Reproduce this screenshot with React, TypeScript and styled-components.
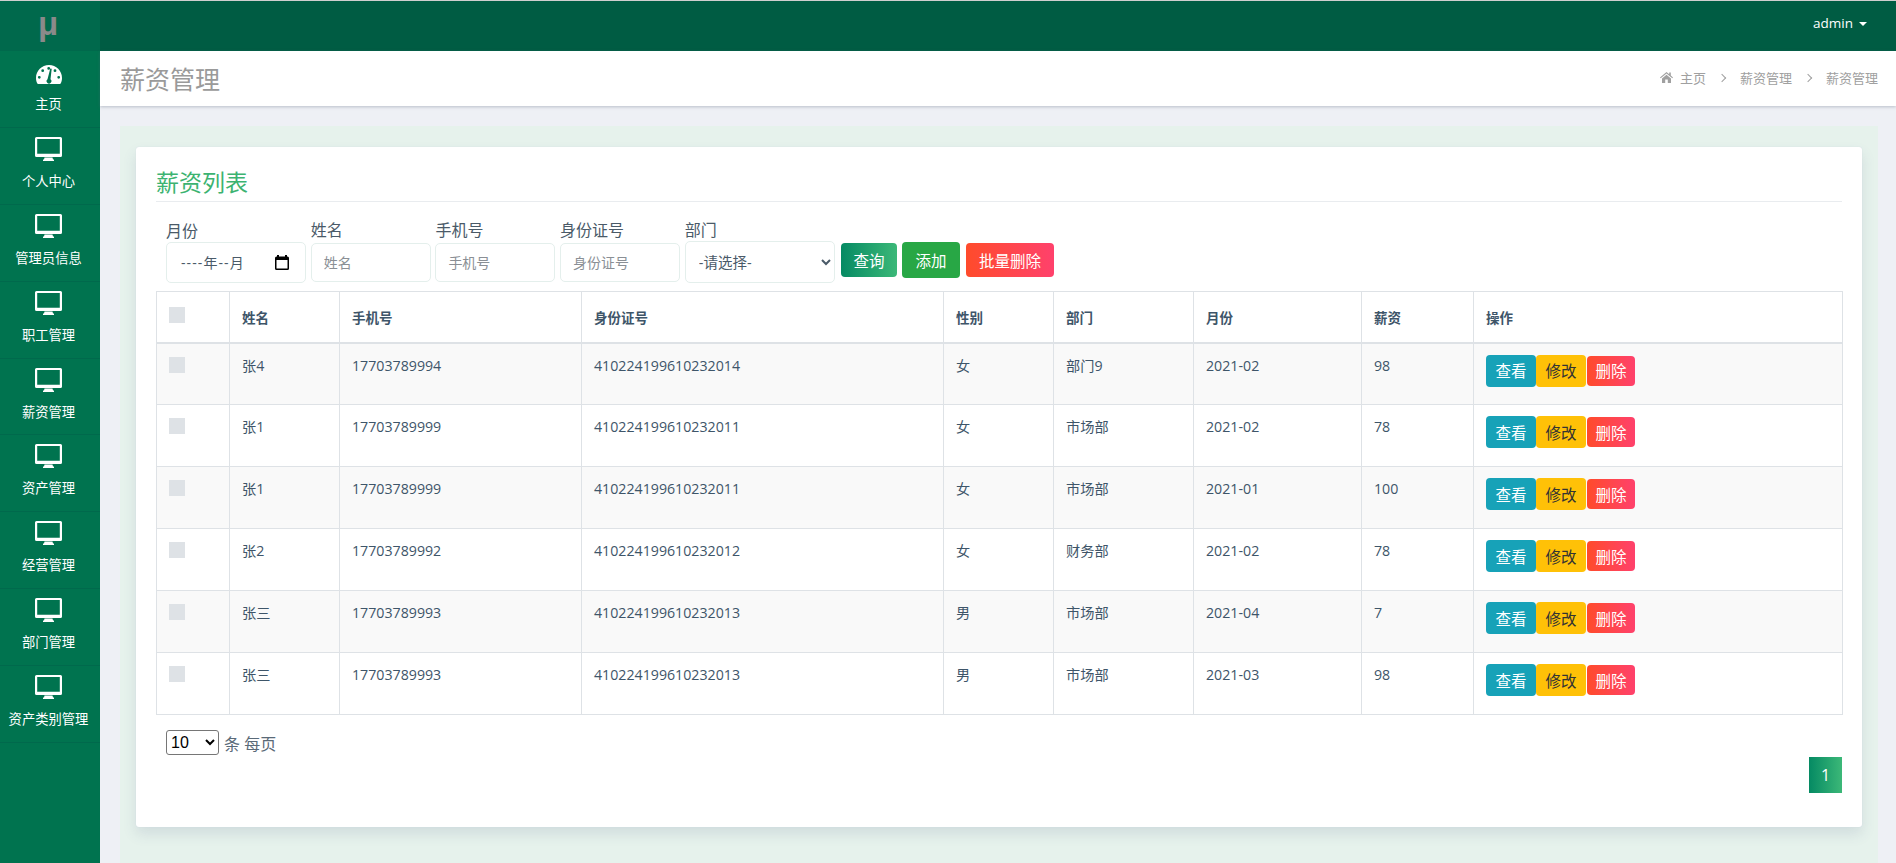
import React from 'react';
import styled, { createGlobalStyle } from 'styled-components';

const cjk = '"Open Sans", "Noto Sans CJK SC", sans-serif';

const menus = ['主页', '个人中心', '管理员信息', '职工管理', '薪资管理', '资产管理', '经营管理', '部门管理', '资产类别管理'];

const rows = [
  { name: '张4', phone: '17703789994', id: '410224199610232014', sex: '女', dept: '部门9', month: '2021-02', pay: '98' },
  { name: '张1', phone: '17703789999', id: '410224199610232011', sex: '女', dept: '市场部', month: '2021-02', pay: '78' },
  { name: '张1', phone: '17703789999', id: '410224199610232011', sex: '女', dept: '市场部', month: '2021-01', pay: '100' },
  { name: '张2', phone: '17703789992', id: '410224199610232012', sex: '女', dept: '财务部', month: '2021-02', pay: '78' },
  { name: '张三', phone: '17703789993', id: '410224199610232013', sex: '男', dept: '市场部', month: '2021-04', pay: '7' },
  { name: '张三', phone: '17703789993', id: '410224199610232013', sex: '男', dept: '市场部', month: '2021-03', pay: '98' },
];

const GlobalStyle = createGlobalStyle`
  html, body {
    margin: 0;
    padding: 0;
    height: 100%;
    overflow: hidden;
  }
  body {
    font-family: ${cjk};
    font-size: 14px;
    color: #3e5569;
    background: #eef0f5;
  }
  * {
    box-sizing: border-box;
  }
`;

const Page = styled.div`
  display: flex;
  flex-direction: column;
  height: 863px;
  border-top: 1px solid #cfcfcf;
`;

const TopBar = styled.header`
  display: flex;
  flex: none;
  height: 50px;
  background: #005c43;
`;

const LogoCell = styled.div`
  width: 100px;
  background: #00694c;
  color: #8a8a8a;
  font: bold 33px/45px "Liberation Sans", sans-serif;
  text-align: center;
  padding-right: 4px;
`;

const UserMenu = styled.div`
  margin-left: auto;
  padding: 14px 29px 0 0;
  color: #fff;
  font-size: 13.5px;
  line-height: 17px;
  display: flex;
  align-items: flex-start;
`;

const Caret = styled.span`
  margin: 7px 0 0 6px;
  border-top: 4px solid #fff;
  border-left: 4px solid transparent;
  border-right: 4px solid transparent;
`;

const Body = styled.div`
  display: flex;
  flex: 1;
  min-height: 0;
`;

const Sidebar = styled.nav`
  width: 100px;
  flex: none;
  background: #00734f;
`;

const MenuItem = styled.a`
  display: flex;
  flex-direction: column;
  align-items: center;
  height: 76.9px;
  padding: 9px 3px 0 0;
  border-bottom: 1px solid #00694c;
  color: #fff;
  font-size: 13.3px;
  line-height: 18px;
  white-space: nowrap;
`;

const IconSlot = styled.span`
  display: flex;
  align-items: flex-end;
  height: 24px;
  margin-bottom: 11px;
`;

const Main = styled.main`
  flex: 1;
  min-width: 0;
  display: flex;
  flex-direction: column;
`;

const TitleBar = styled.div`
  display: flex;
  flex: none;
  align-items: center;
  justify-content: space-between;
  height: 55px;
  padding: 0 18px 2px 20px;
  background: #fff;
  box-shadow: 0 1px 3px rgba(90, 100, 120, 0.35);
`;

const PageTitle = styled.h1`
  margin: 0;
  font-size: 25px;
  font-weight: 400;
  color: #9a9a9a;
`;

const Crumbs = styled.div`
  display: flex;
  align-items: center;
  font-size: 13px;
  color: #a0a0a0;
  svg {
    margin-right: 7px;
  }
`;

const CrumbSep = styled.span`
  width: 6px;
  height: 6px;
  margin: 0 15px 0 13px;
  border-top: 1px solid #a0a0a0;
  border-right: 1px solid #a0a0a0;
  transform: rotate(45deg);
`;

const Content = styled.div`
  flex: 1;
  min-height: 0;
  margin: 20px 18px 0 20px;
  padding: 21px 16px 0;
  background: #e6f2ec;
`;

const Card = styled.section`
  height: 680px;
  padding: 20px 20px 0;
  background: #fff;
  border-radius: 3px;
  box-shadow: 0 0 1px #c9d3de, 0 7px 14px rgba(60, 80, 120, 0.13);
`;

const CardTitle = styled.h2`
  margin: 0;
  height: 35px;
  font-size: 23px;
  line-height: 30px;
  font-weight: 400;
  color: #3cb371;
  border-bottom: 1px solid #e9ecef;
`;

const FilterRow = styled.div`
  display: flex;
  align-items: flex-end;
  height: 89px;
  padding: 0 0 8px 10px;
`;

const Field = styled.label`
  display: flex;
  flex-direction: column;
  margin-right: 4.7px;
  font-size: 16px;
  line-height: 20px;
  color: #4a5a68;
`;

const Input = styled.input`
  width: 120px;
  height: 39px;
  margin-top: 3px;
  margin-bottom: 1px;
  padding: 0 12px;
  background: #fff;
  border: 1px solid #e4efec;
  border-radius: 5px;
  color: #5a6a78;
  font-family: ${cjk};
  font-size: 14px;
  outline: none;
  &::placeholder {
    color: #8a8f95;
  }
`;

const DateBox = styled.div`
  display: flex;
  align-items: center;
  justify-content: space-between;
  width: 140px;
  height: 41px;
  margin-top: 1px;
  padding: 0 16px 0 14px;
  background: #fff;
  border: 1px solid #e4efec;
  border-radius: 5px;
  color: #4a5a68;
  font-size: 14px;
`;

const DateText = styled.span`
  letter-spacing: 1.1px;
`;

const Select = styled.select`
  width: 150px;
  height: 42px;
  margin-top: 1px;
  padding: 0 9px;
  background: #fff;
  border: 1px solid #e4efec;
  border-radius: 5px;
  color: #4a5a68;
  font-family: ${cjk};
  font-size: 14.5px;
  outline: none;
`;

const Btn = styled.button<{ $bg: string; $dark?: boolean }>`
  display: inline-flex;
  align-items: center;
  justify-content: center;
  padding: 0;
  border: none;
  border-radius: 4px;
  background: ${({ $bg }) => $bg};
  color: ${({ $dark }) => ($dark ? '#333' : '#fff')};
  font-family: ${cjk};
  font-size: 15.500px;
`;

const FilterBtn = styled(Btn)<{ $w: number; $h: number; $ml: number; $mb: number }>`
  width: ${({ $w }) => $w}px;
  height: ${({ $h }) => $h}px;
  margin-left: ${({ $ml }) => $ml}px;
  margin-bottom: ${({ $mb }) => $mb}px;
`;

const Table = styled.table`
  width: 1686px;
  table-layout: fixed;
  border-collapse: collapse;
  border: 1px solid #dee2e6;
`;

const Th = styled.th`
  height: 51px;
  padding: 12px;
  border: 1px solid #dee2e6;
  border-bottom: 2px solid #dee2e6;
  font-size: 13.5px;
  font-weight: 700;
  text-align: left;
  color: #3e5569;
  vertical-align: middle;
`;

const Tr = styled.tr`
  height: 62px;
  &:nth-child(odd) {
    background: #f9f9f9;
  }
`;

const Td = styled.td`
  padding: 12px;
  border: 1px solid #dee2e6;
  vertical-align: top;
  line-height: 19px;
  font-size: 14.2px;
`;

const Check = styled.span`
  display: block;
  width: 16px;
  height: 16px;
  margin-top: 1px;
  background: #dee2e6;
`;

const HeadCheck = styled(Check)`
  margin-top: -4px;
`;

const Actions = styled.div`
  display: flex;
  align-items: center;
  height: 32px;
  margin-top: -1px;
`;

const ViewBtn = styled(Btn)`
  width: 50px;
  height: 32px;
`;

const DeleteBtn = styled(Btn)`
  width: 48px;
  height: 30px;
  margin-left: 1px;
`;

const Pager = styled.div`
  position: relative;
  display: flex;
  align-items: center;
  padding: 15px 0 0 10px;
  font-size: 16px;
  color: #5a6a78;
`;

const SizeSelect = styled.select`
  width: 53px;
  height: 25px;
  margin-right: 5px;
  font-family: "Liberation Sans", sans-serif;
  font-size: 16px;
  color: #000;
  background: #fff;
  border: 1px solid #767676;
  border-radius: 3px;
`;

const PageLink = styled.span`
  position: absolute;
  right: 0;
  top: 42px;
  width: 33px;
  height: 36px;
  display: flex;
  align-items: center;
  justify-content: center;
  color: #fff;
  font-size: 16px;
  background: linear-gradient(90deg, #058a63, #3cb878);
`;

const green = 'linear-gradient(90deg, #058a63, #3cb878)';
const red = 'linear-gradient(90deg, #ff4b2b, #ff416c)';

const DesktopIcon = () => (
  <svg width="27" height="24" viewBox="0 0 27 24" fill="#fff">
    <path fillRule="evenodd" d="M1.500 0h24A1.500 1.500 0 0 1 27 1.500v17a1.500 1.500 0 0 1-1.500 1.500h-24A1.500 1.500 0 0 1 0 18.500v-17A1.500 1.500 0 0 1 1.500 0zM2.200 2v14.800h22.600V2z" />
    <path d="M9.500 20.500h8l.5 2h1v1.500H8v-1.500h1z" />
  </svg>
);

const GaugeIcon = () => (
  <svg width="26" height="19" viewBox="0 0 26 19" fill="#fff">
    <path
      fillRule="evenodd"
      d="M13 0C5.800 0 0 5.800 0 13c0 2 .5 4 1.300 5.600.2.300.5.400.8.400h21.800c.3 0 .6-.1.800-.4C25.500 17 26 15 26 13 26 5.800 20.200 0 13 0zM12.700 2a1.400 1.400 0 1 1 0 2.800 1.400 1.400 0 0 1 0-2.800zM6.700 4.300a1.400 1.400 0 1 1 0 2.800 1.400 1.400 0 0 1 0-2.800zM19 4.300a1.400 1.400 0 1 1 0 2.800 1.400 1.400 0 0 1 0-2.800zM3.300 10.900a1.400 1.400 0 1 1 0 2.800 1.400 1.400 0 0 1 0-2.800zM22.700 10.900a1.400 1.400 0 1 1 0 2.800 1.400 1.400 0 0 1 0-2.800zM14.300 3.500l1.400.3-1.200 10.500a2.400 2.400 0 1 1-3 .0z"
    />
  </svg>
);

const HomeIcon = () => (
  <svg width="13" height="11" viewBox="0 0 13 11" fill="#a0a0a0">
    <path d="M6.500 0 0 5.500l.7.800L6.500 1.500l5.800 4.800.7-.8L10.800 3.600V.6H9.200v1.700zM2 6.500V11h3.200V7.500h2.600V11H11V6.500L6.500 2.800z" />
  </svg>
);

const CalendarIcon = () => (
  <svg width="14" height="15" viewBox="0 0 14 15" fill="#000">
    <path fillRule="evenodd" d="M2 0h2v1.500h6V0h2v1.500h.5A1.500 1.500 0 0 1 14 3v10.500a1.500 1.500 0 0 1-1.500 1.500h-11A1.500 1.500 0 0 1 0 13.500V3a1.500 1.500 0 0 1 1.500-1.500H2zM1.500 5v8.500h11V5z" />
  </svg>
);

const App = () => (
  <Page>
    <GlobalStyle />
    <TopBar>
      <LogoCell>μ</LogoCell>
      <UserMenu>
        admin
        <Caret />
      </UserMenu>
    </TopBar>
    <Body>
      <Sidebar>
        {menus.map((m, i) => (
          <MenuItem key={m}>
            <IconSlot>{i === 0 ? <GaugeIcon /> : <DesktopIcon />}</IconSlot>
            {m}
          </MenuItem>
        ))}
      </Sidebar>
      <Main>
        <TitleBar>
          <PageTitle>薪资管理</PageTitle>
          <Crumbs>
            <HomeIcon />
            主页
            <CrumbSep />
            薪资管理
            <CrumbSep />
            薪资管理
          </Crumbs>
        </TitleBar>
        <Content>
          <Card>
            <CardTitle>薪资列表</CardTitle>
            <FilterRow>
              <Field>
                月份
                <DateBox>
                  <DateText>----年--月</DateText>
                  <CalendarIcon />
                </DateBox>
              </Field>
              <Field>
                姓名
                <Input placeholder="姓名" />
              </Field>
              <Field>
                手机号
                <Input placeholder="手机号" />
              </Field>
              <Field>
                身份证号
                <Input placeholder="身份证号" />
              </Field>
              <Field>
                部门
                <Select defaultValue="">
                  <option value="">-请选择-</option>
                </Select>
              </Field>
              <FilterBtn $bg={green} $w={56} $h={34} $ml={1.5} $mb={6}>查询</FilterBtn>
              <FilterBtn $bg="#28a745" $w={58} $h={36} $ml={5} $mb={5}>添加</FilterBtn>
              <FilterBtn $bg={red} $w={88} $h={34} $ml={6} $mb={6}>批量删除</FilterBtn>
            </FilterRow>
            <Table>
              <colgroup>
                <col style={{ width: 73 }} />
                <col style={{ width: 110 }} />
                <col style={{ width: 242 }} />
                <col style={{ width: 362 }} />
                <col style={{ width: 110 }} />
                <col style={{ width: 140 }} />
                <col style={{ width: 168 }} />
                <col style={{ width: 112 }} />
                <col style={{ width: 369 }} />
              </colgroup>
              <thead>
                <tr>
                  <Th><HeadCheck /></Th>
                  <Th>姓名</Th>
                  <Th>手机号</Th>
                  <Th>身份证号</Th>
                  <Th>性别</Th>
                  <Th>部门</Th>
                  <Th>月份</Th>
                  <Th>薪资</Th>
                  <Th>操作</Th>
                </tr>
              </thead>
              <tbody>
                {rows.map((r, i) => (
                  <Tr key={i}>
                    <Td><Check /></Td>
                    <Td>{r.name}</Td>
                    <Td>{r.phone}</Td>
                    <Td>{r.id}</Td>
                    <Td>{r.sex}</Td>
                    <Td>{r.dept}</Td>
                    <Td>{r.month}</Td>
                    <Td>{r.pay}</Td>
                    <Td>
                      <Actions>
                        <ViewBtn $bg="#17a2b8">查看</ViewBtn>
                        <ViewBtn $bg="#ffc107" $dark>修改</ViewBtn>
                        <DeleteBtn $bg={red}>删除</DeleteBtn>
                      </Actions>
                    </Td>
                  </Tr>
                ))}
              </tbody>
            </Table>
            <Pager>
              <SizeSelect defaultValue="10">
                <option value="10">10</option>
              </SizeSelect>
              条 每页
              <PageLink>1</PageLink>
            </Pager>
          </Card>
        </Content>
      </Main>
    </Body>
  </Page>
);

export default App;
